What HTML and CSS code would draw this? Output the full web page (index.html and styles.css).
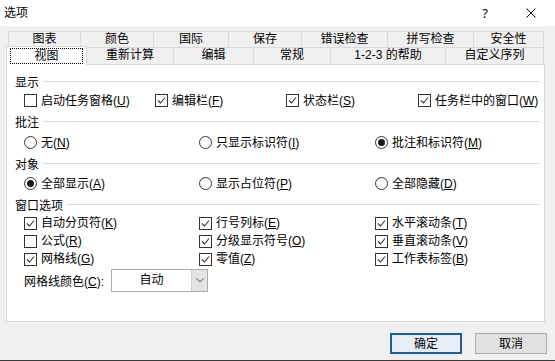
FILE: index.html
```html
<!DOCTYPE html>
<html lang="zh-CN">
<head>
    <meta charset="UTF-8">
    <title>选项</title>
    <link rel="stylesheet" href="styles.css">
</head>
<body>
    <div class="titlebar">
        <span class="title">选项</span>
        <span class="title-btn help">?</span>
        <span class="title-btn">
            <svg width="10" height="10" viewBox="0 0 10 10"><path d="M0.5 0.5 L9.5 9.5 M9.5 0.5 L0.5 9.5" stroke="#000" stroke-width="1" fill="none"/></svg>
        </span>
    </div>

    <div class="tabs">
        <div class="tab-row back">
            <div class="tab">图表</div>
            <div class="tab">颜色</div>
            <div class="tab">国际</div>
            <div class="tab">保存</div>
            <div class="tab">错误检查</div>
            <div class="tab">拼写检查</div>
            <div class="tab">安全性</div>
        </div>
        <div class="tab-row front">
            <div class="tab active"><span class="focus">视图</span></div>
            <div class="tab">重新计算</div>
            <div class="tab">编辑</div>
            <div class="tab">常规</div>
            <div class="tab">1-2-3 的帮助</div>
            <div class="tab">自定义序列</div>
        </div>
    </div>

    <div class="panel">
        <div class="legend">显示</div>
        <div class="opts four row-a">
            <label class="opt"><span class="box"></span><span>启动任务窗格(<u>U</u>)</span></label>
            <label class="opt"><span class="box on"><svg width="11" height="11" viewBox="0 0 11 11"><path d="M2 5.5 L4.5 8 L9 2.5" stroke="#333" stroke-width="1.1" fill="none"/></svg></span><span>编辑栏(<u>F</u>)</span></label>
            <label class="opt"><span class="box on"><svg width="11" height="11" viewBox="0 0 11 11"><path d="M2 5.5 L4.5 8 L9 2.5" stroke="#333" stroke-width="1.1" fill="none"/></svg></span><span>状态栏(<u>S</u>)</span></label>
            <label class="opt"><span class="box on"><svg width="11" height="11" viewBox="0 0 11 11"><path d="M2 5.5 L4.5 8 L9 2.5" stroke="#333" stroke-width="1.1" fill="none"/></svg></span><span>任务栏中的窗口(<u>W</u>)</span></label>
        </div>

        <div class="legend">批注</div>
        <div class="opts three row-b">
            <label class="opt"><span class="radio"></span><span>无(<u>N</u>)</span></label>
            <label class="opt"><span class="radio"></span><span>只显示标识符(<u>I</u>)</span></label>
            <label class="opt"><span class="radio on"></span><span>批注和标识符(<u>M</u>)</span></label>
        </div>

        <div class="legend">对象</div>
        <div class="opts three row-b">
            <label class="opt"><span class="radio on"></span><span>全部显示(<u>A</u>)</span></label>
            <label class="opt"><span class="radio"></span><span>显示占位符(<u>P</u>)</span></label>
            <label class="opt"><span class="radio"></span><span>全部隐藏(<u>D</u>)</span></label>
        </div>

        <div class="legend">窗口选项</div>
        <div class="opts three row-c">
            <label class="opt"><span class="box on"><svg width="11" height="11" viewBox="0 0 11 11"><path d="M2 5.5 L4.5 8 L9 2.5" stroke="#333" stroke-width="1.1" fill="none"/></svg></span><span>自动分页符(<u>K</u>)</span></label>
            <label class="opt"><span class="box on"><svg width="11" height="11" viewBox="0 0 11 11"><path d="M2 5.5 L4.5 8 L9 2.5" stroke="#333" stroke-width="1.1" fill="none"/></svg></span><span>行号列标(<u>E</u>)</span></label>
            <label class="opt"><span class="box on"><svg width="11" height="11" viewBox="0 0 11 11"><path d="M2 5.5 L4.5 8 L9 2.5" stroke="#333" stroke-width="1.1" fill="none"/></svg></span><span>水平滚动条(<u>T</u>)</span></label>
        </div>
        <div class="opts three row-c">
            <label class="opt"><span class="box"></span><span>公式(<u>R</u>)</span></label>
            <label class="opt"><span class="box on"><svg width="11" height="11" viewBox="0 0 11 11"><path d="M2 5.5 L4.5 8 L9 2.5" stroke="#333" stroke-width="1.1" fill="none"/></svg></span><span>分级显示符号(<u>O</u>)</span></label>
            <label class="opt"><span class="box on"><svg width="11" height="11" viewBox="0 0 11 11"><path d="M2 5.5 L4.5 8 L9 2.5" stroke="#333" stroke-width="1.1" fill="none"/></svg></span><span>垂直滚动条(<u>V</u>)</span></label>
        </div>
        <div class="opts three row-c">
            <label class="opt"><span class="box on"><svg width="11" height="11" viewBox="0 0 11 11"><path d="M2 5.5 L4.5 8 L9 2.5" stroke="#333" stroke-width="1.1" fill="none"/></svg></span><span>网格线(<u>G</u>)</span></label>
            <label class="opt"><span class="box on"><svg width="11" height="11" viewBox="0 0 11 11"><path d="M2 5.5 L4.5 8 L9 2.5" stroke="#333" stroke-width="1.1" fill="none"/></svg></span><span>零值(<u>Z</u>)</span></label>
            <label class="opt"><span class="box on"><svg width="11" height="11" viewBox="0 0 11 11"><path d="M2 5.5 L4.5 8 L9 2.5" stroke="#333" stroke-width="1.1" fill="none"/></svg></span><span>工作表标签(<u>B</u>)</span></label>
        </div>

        <div class="grid-color">
            <span class="gc-label">网格线颜色(<u>C</u>):</span>
            <div class="select">
                <span class="select-val">自动</span>
                <span class="select-arrow">
                    <svg width="8" height="5" viewBox="0 0 8 5"><path d="M0.5 0.5 L4 4 L7.5 0.5" stroke="#555" stroke-width="1" fill="none"/></svg>
                </span>
            </div>
        </div>
    </div>

    <div class="actions">
        <button class="btn default">确定</button>
        <button class="btn">取消</button>
    </div>
</body>
</html>
```

FILE: styles.css
```css
* {
    margin: 0;
    padding: 0;
    box-sizing: border-box;
}

body {
    width: 555px;
    height: 361px;
    overflow: hidden;
    background: #f0f0f0;
    font-family: "Liberation Sans", "Noto Sans CJK SC", sans-serif;
    font-size: 12px;
    color: #000;
    border-bottom: 1px solid #3a3a3a;
}

u {
    text-decoration: underline;
    text-underline-offset: 1px;
}

/* title bar */
.titlebar {
    height: 26px;
    background: #fff;
    display: flex;
    align-items: center;
    padding-left: 4px;
    padding-right: 1px;
}

.title {
    flex: 1;
    line-height: 14px;
}

.title-btn {
    width: 46px;
    height: 26px;
    display: flex;
    align-items: center;
    justify-content: center;
}

.help {
    font-family: "Noto Sans", sans-serif;
    font-size: 13px;
}

/* tabs */
.tabs {
    margin-top: 5px;
}

.tab-row {
    display: grid;
}

.tab-row.back {
    margin-left: 8px;
    height: 16px;
    grid-template-columns: 72px 73px 75px 73px 86px 86px 71px;
}

.tab-row.front {
    margin-left: 6px;
    height: 17px;
    grid-template-columns: 81px 86px 80px 77px 115px 99px;
}

.tab {
    border: 1px solid #d9d9d9;
    border-bottom: none;
    border-right: none;
    text-align: center;
    line-height: 15px;
    white-space: nowrap;
}

.tab:last-child {
    border-right: 1px solid #d9d9d9;
}

.tab.active {
    background: #fff;
    margin-top: -1px;
    height: 19px;
    position: relative;
    z-index: 1;
    border-right: 1px solid #d9d9d9;
}

.tab.active + .tab {
    border-left: none;
}

.focus {
    display: block;
    margin: 1px 3px 0;
    height: 16px;
    line-height: 14px;
    border: 1px dotted #000;
}

/* panel */
.panel {
    margin-left: 6px;
    width: 539px;
    height: 258px;
    border: 1px solid #d9d9d9;
    background: #fff;
    padding: 6px 4px 0 8px;
}

.legend {
    display: flex;
    align-items: center;
    gap: 4px;
    height: 20px;
}

.legend::after {
    content: "";
    flex: 1;
    height: 1px;
    background: #dcdcdc;
}

.opts {
    display: grid;
    align-items: center;
    padding-left: 9px;
}

.opts.four {
    grid-template-columns: 131px 131px 132px 1fr;
}

.opts.three {
    grid-template-columns: 175px 176px 1fr;
}

.row-a {
    height: 19px;
}

.row-b {
    height: 21px;
}

.row-c {
    height: 18px;
}

.row-a + .legend {
    height: 22px;
}

.opt {
    display: flex;
    align-items: center;
    gap: 4px;
    white-space: nowrap;
    line-height: 14px;
}

.box {
    width: 13px;
    height: 13px;
    flex: none;
    border: 1px solid #333;
    background: #fff;
    display: flex;
    align-items: center;
    justify-content: center;
}

.radio {
    width: 13px;
    height: 13px;
    flex: none;
    border: 1px solid #333;
    border-radius: 50%;
    background: #fff;
    display: flex;
    align-items: center;
    justify-content: center;
}

.radio.on::after {
    content: "";
    width: 7px;
    height: 7px;
    border-radius: 50%;
    background: #1a1a1a;
}

.grid-color {
    display: flex;
    align-items: center;
    height: 24px;
    padding-left: 9px;
}

.gc-label {
    width: 87px;
    white-space: nowrap;
}

.select {
    width: 97px;
    height: 23px;
    border: 1px solid #adadad;
    background: #fff;
    display: flex;
}

.select-val {
    flex: 1;
    text-align: center;
    line-height: 21px;
}

.select-arrow {
    width: 16px;
    background: #e3e3e3;
    border-left: 1px solid #cfcfcf;
    display: flex;
    align-items: center;
    justify-content: center;
}

/* bottom buttons */
.actions {
    display: flex;
    justify-content: flex-end;
    gap: 13px;
    padding-right: 8px;
    margin-top: 11px;
}

.btn {
    width: 72px;
    height: 21px;
    border: 1px solid #adadad;
    background: #e1e1e1;
    font: inherit;
    line-height: 18px;
    text-align: center;
    color: #000;
}

.btn.default {
    border: 2px solid #1f5f8f;
    background: #e5eef6;
}
```
